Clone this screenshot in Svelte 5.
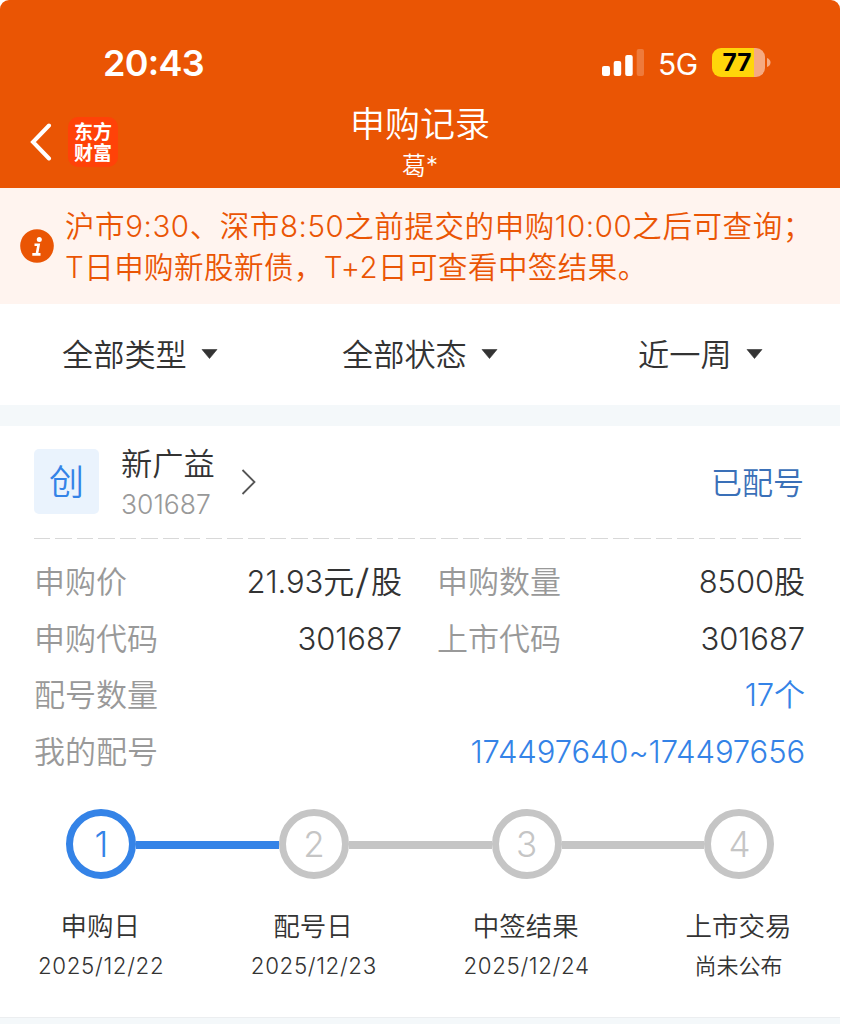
<script>
  const filters = ['全部类型', '全部状态', '近一周'];
  const steps = [
    { name: '申购日', date: '2025/12/22', active: true },
    { name: '配号日', date: '2025/12/23' },
    { name: '中签结果', date: '2025/12/24' },
    { name: '上市交易', date: '尚未公布', cjk: true }
  ];
</script>

<div class="page">
  <header>
    <div class="status">
      <span class="time">20<i>:</i>43</span>
      <div class="indicators">
        <svg width="42" height="28" viewBox="0 0 42 28" fill="#fff">
          <rect x="0" y="17" width="8" height="10" rx="2" />
          <rect x="11.7" y="12" width="7.5" height="15" rx="2" />
          <rect x="23.2" y="6" width="7.5" height="21" rx="2" />
          <rect x="34.7" y="0" width="7.3" height="27" rx="2" opacity=".22" />
        </svg>
        <span class="net">5G</span>
        <span class="battery"><b>77</b></span>
        <svg class="cap" width="4" height="9" viewBox="0 0 4 9"><path d="M0 0Q3.5 1.5 3.5 4.5T0 9Z" fill="#f5aa82" /></svg>
      </div>
    </div>
    <div class="nav">
      <div class="left">
        <svg width="22" height="38" viewBox="0 0 22 38" fill="none" stroke="#fff" stroke-width="4" stroke-linecap="round" stroke-linejoin="miter"><path d="M19 2.5L3 19L19 35.5" /></svg>
        <div class="logo">东方财富</div>
      </div>
      <div class="title">
        <h1>申购记录</h1>
        <p>葛*</p>
      </div>
    </div>
  </header>

  <section class="notice">
    <svg width="34" height="34" viewBox="0 0 34 34">
      <circle cx="17" cy="17" r="16.8" fill="#ea5504" />
      <circle cx="19.3" cy="10.4" r="2.5" fill="#fff" />
      <path d="M14.5 15.8H18.6L16.8 25.4M12.3 25.4H20.5" fill="none" stroke="#fff" stroke-width="2.6" />
    </svg>
    <div class="lines">
      <p>沪市9:30、深市8:50之前提交的申购10:00之后可查询；</p>
      <p class="second">T日申购新股新债，T+2日可查看中签结果。</p>
    </div>
  </section>

  <nav class="filters">
    {#each filters as label}
      <div class="filter"><span>{label}</span><svg width="17" height="10" viewBox="0 0 17 10"><path d="M1 .5H16L8.5 9.5Z" fill="#333" stroke="#333" stroke-width=".6" stroke-linejoin="round" /></svg></div>
    {/each}
  </nav>

  <div class="gap"></div>

  <main>
    <div class="stock">
      <div class="tag">创</div>
      <div class="names"><span class="name">新广益</span><span class="code">301687</span></div>
      <svg width="16" height="28" viewBox="0 0 16 28" fill="none" stroke="#555" stroke-width="1.8"><path d="M1.5 2L13.5 14L1.5 26" /></svg>
      <span class="state">已配号</span>
    </div>
    <div class="dash"></div>
    <div class="info">
      <div class="row">
        <span class="label c1">申购价</span><span class="value v1">21.93<i>元</i><i class="slash">/</i><i>股</i></span>
        <span class="label c2">申购数量</span><span class="value">8500<i>股</i></span>
      </div>
      <div class="row">
        <span class="label c1">申购代码</span><span class="value v1">301687</span>
        <span class="label c2">上市代码</span><span class="value">301687</span>
      </div>
      <div class="row"><span class="label">配号数量</span><span class="value blue">17<i>个</i></span></div>
      <div class="row"><span class="label">我的配号</span><span class="value blue">174497640~174497656</span></div>
    </div>
    <div class="steps">
      {#each steps as s, n}
        <div class="step" class:active={s.active}>
          <div class="mark"><span class="num">{n + 1}</span></div>
          <span class="sname">{s.name}</span>
          <span class="date" class:cjk={s.cjk}>{s.date}</span>
        </div>
      {/each}
    </div>
  </main>
  <div class="foot"></div>
</div>

<style>
  :global(body) { background: #fff; }
  .page { width: 840px; height: 1024px; overflow: hidden; display: flex; flex-direction: column; background: #fff; color: #333; font-family: Inter, "Noto Sans CJK SC", sans-serif; font-weight: 350; }
  .page * { box-sizing: border-box; }
  h1, p { margin: 0; font-weight: 350; }
  i { font-style: normal; }
  svg { flex: none; display: block; }
  span { white-space: nowrap; }
  header { height: 188px; background: #ea5504; border-radius: 9px 9px 0 0; color: #fff; flex: none; }
  .status { height: 98px; padding: 28px 70px 0 103px; display: flex; justify-content: space-between; }
  .time { font-size: 36px; line-height: 70px; font-weight: 600; letter-spacing: -.7px; }
  .time i { display: inline-block; transform: translateY(-1px); }
  .indicators { height: 70px; display: flex; align-items: center; }
  .net { font-size: 30px; font-weight: 400; margin-left: 14px; width: 54px; letter-spacing: -.5px; line-height: 70px; padding-top: 1px; }
  .battery { width: 53px; height: 29px; margin-bottom: 1px; padding-right: 3px; border-radius: 9px; background: linear-gradient(90deg, #ffd60a 41.5px, #f5aa82 41.5px); color: #000; text-align: center; line-height: 29px; font-size: 24.5px; }
  .battery b { font-weight: 700; }
  .cap { margin: 0 -1px 1px 2px; }
  .nav { height: 90px; display: grid; grid-template-columns: 1fr 200px 1fr; }
  .left { display: flex; align-items: center; padding: 0 0 3px 30px; gap: 16px; }
  .logo { width: 50px; height: 50px; padding: 3px 5px 0 6px; border-radius: 10px; background: #ff4208; font: 700 19px/21px "Noto Sans CJK SC", sans-serif; }
  .title { display: flex; flex-direction: column; align-items: center; padding-top: 1px; }
  h1 { font-size: 35px; line-height: 50px; }
  .title p { font-size: 24px; line-height: 34px; }
  .notice { height: 116px; background: #fff4ef; color: #ea5504; display: flex; align-items: center; padding-left: 20px; gap: 11px; flex: none; }
  .lines { padding-top: 2px; }
  .lines p { height: 41px; line-height: 41px; font-size: 29.5px; letter-spacing: .58px; white-space: nowrap; }
  .lines .second { letter-spacing: .45px; }
  .filters { height: 101px; display: grid; grid-template-columns: 280px 296px 1fr; align-items: center; padding: 0 0 0 62px; flex: none; }
  .filter { display: flex; align-items: center; gap: 14px; font-size: 31.2px; line-height: 44px; }
  .filter svg { margin-bottom: 2px; }
  .gap { height: 21px; background: #f4f8fa; flex: none; }
  main { height: 591px; flex: none; padding-top: 23px; }
  .stock { height: 89px; display: flex; padding: 0 36px 0 34px; align-items: flex-start; }
  .tag { width: 65px; height: 65px; border-radius: 5px; background: #eaf3fd; color: #3483e7; font-size: 35px; line-height: 67px; text-align: center; }
  .names { width: 120px; margin-left: 22px; display: flex; flex-direction: column; }
  .name { font-size: 31.2px; line-height: 31px; }
  .code { font-size: 26.5px; line-height: 30px; margin-top: 9px; color: #999; font-weight: 300; }
  .stock svg { margin-top: 19px; }
  .state { margin-left: auto; line-height: 67px; font-size: 31px; color: #3a70b8; }
  .dash { height: 1px; margin: 0 38px 0 34px; background: repeating-linear-gradient(90deg, #d8d8d8 0 16.3px, transparent 16.3px 21.44px); }
  .info { padding: 15px 35px 0 34px; font-size: 31px; }
  .row { height: 56.5px; line-height: 56.5px; display: flex; justify-content: space-between; }
  .label { color: #999; }
  .c1 { width: 180px; }
  .v1 { width: 188px; text-align: right; }
  .c2 { margin-left: 35px; margin-right: auto; }
  .value { letter-spacing: -.1px; }
  .value i { letter-spacing: 0; }
  .value .slash { display: inline-block; transform: scale(1.35, 1.12); margin: 0 3px; font-weight: 300; }
  .blue { color: #3483e7; }
  .steps { display: grid; grid-template-columns: repeat(4, 212.7px); padding-top: 29px; margin-left: -6px; }
  .step { display: flex; flex-direction: column; align-items: center; }
  .mark { width: 100%; height: 70px; display: flex; align-items: center; justify-content: center; transform: translateX(1px); }
  .mark::before, .mark::after { content: ""; height: 8px; flex: 1; background: #c5c5c5; margin-top: 2px; }
  .step:first-child .mark::before, .step:last-child .mark::after { visibility: hidden; }
  .step.active .mark::after, .step.active + .step .mark::before { background: #3483e7; }
  .num { width: 70px; height: 70px; border: 7px solid #c5c5c5; border-radius: 50%; color: #c5c5c5; font-size: 35px; font-weight: 300; line-height: 56px; text-align: center; }
  .active .num { border-color: #3483e7; color: #3483e7; }
  .sname { font-size: 26.5px; line-height: 40px; margin-top: 27px; }
  .date { font-size: 22.3px; line-height: 34px; margin-top: 3px; letter-spacing: .65px; transform: translateX(.8px); }
  .date.cjk { font-size: 22px; letter-spacing: 0; transform: none; }
  .foot { height: 7px; background: #f4f8fa; border-top: 1px solid #eceef0; flex: none; }
</style>
